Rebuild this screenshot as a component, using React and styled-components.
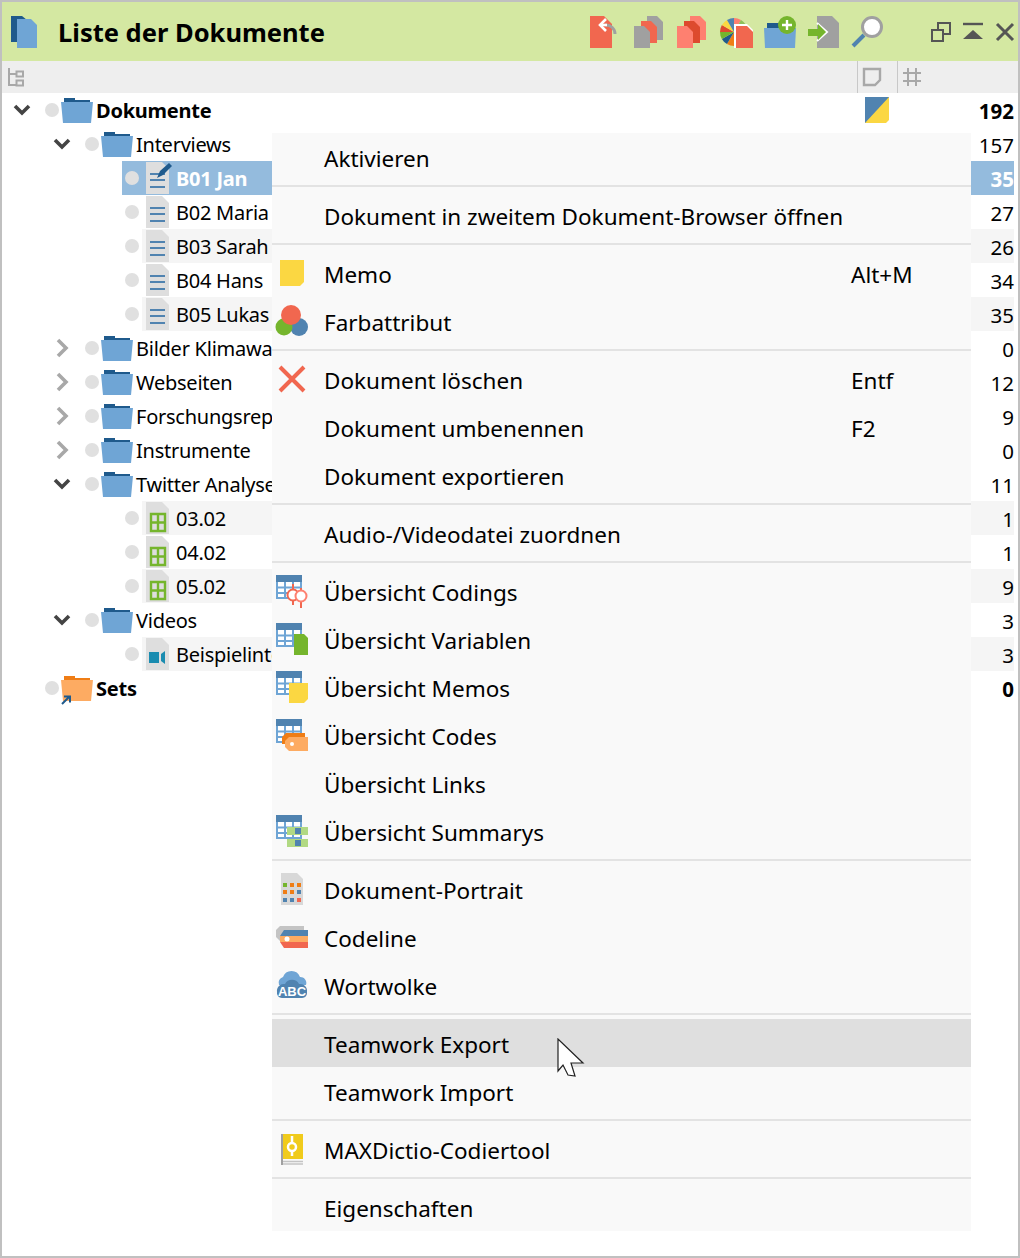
import React from "react";
import styled, { createGlobalStyle } from "styled-components";

const BLUE = "#5083b0";
const LIGHT_BLUE = "#6fa5d5";
const NAVY = "#1f5a8c";
const RED = "#f1674f";
const SALMON = "#fe8070";
const GREEN = "#75b52d";
const YELLOW = "#fbd742";
const ORANGE = "#ef7d15";
const PEACH = "#fdab62";
const GRAY = "#a0a0a0";

const Global = createGlobalStyle`
  html, body {
    margin: 0;
    padding: 0;
    background: #fff;
  }
  body {
    font-family: "Noto Sans", "Open Sans", sans-serif;
    color: #000;
  }
`;

const Win = styled.div`
  position: relative;
  box-sizing: border-box;
  width: 1020px;
  height: 1258px;
  border: 2px solid #c0c0c0;
  background: #fff;
  overflow: hidden;
`;

const TitleBar = styled.div`
  display: flex;
  align-items: center;
  height: 59px;
  padding-left: 9px;
  background: #d4e8a2;
`;

const Title = styled.div`
  margin-left: 20px;
  font-size: 25.5px;
  font-weight: 700;
  flex: 1;
`;

const Tools = styled.div`
  display: flex;
  align-items: center;
  gap: 11.5px;
  margin-right: 48px;
`;

const WinButtons = styled.div`
  display: flex;
  align-items: center;
  gap: 12px;
  margin-right: 3px;
`;

const HeadBar = styled.div`
  display: flex;
  align-items: center;
  height: 32px;
  background: #eeeeee;
`;

const HeadTree = styled.div`
  flex: 1;
  display: flex;
  padding-left: 6px;
`;

const HeadCell = styled.div`
  box-sizing: border-box;
  display: flex;
  align-items: center;
  height: 32px;
  width: ${(p) => p.$w}px;
  padding-left: 5px;
  border-left: 1px solid #c8c8c8;
`;

const Tree = styled.div`
  margin-right: 4px;
`;

const Row = styled.div`
  display: flex;
  height: 34px;
  padding-left: ${(p) => p.$level * 40}px;
`;

const Toggle = styled.div`
  width: 40px;
  display: flex;
  align-items: center;
  justify-content: center;
  flex: none;
`;

const Body = styled.div`
  flex: 1;
  min-width: 0;
  display: flex;
  align-items: center;
  padding-left: 3px;
  background: ${(p) => (p.$selected ? "#94bbdd" : "transparent")};
  color: ${(p) => (p.$selected ? "#fff" : "#000")};
`;

const Dot = styled.span`
  flex: none;
  width: 14px;
  height: 14px;
  border-radius: 50%;
  background: #e0e0e0;
  margin-top: -1px;
`;

const Label = styled.div`
  flex: 1;
  min-width: 0;
  height: 34px;
  display: flex;
  align-items: center;
  margin-left: ${(p) => (p.$leaf ? 3 : 2)}px;
  padding-left: ${(p) => (p.$leaf ? 4 : 0)}px;
  background: ${(p) => (p.$striped ? "#f5f5f5" : "transparent")};
`;

const Name = styled.span`
  margin: 1px 0 0 ${(p) => (p.$leaf ? 7 : 3)}px;
  font-size: 20px;
  letter-spacing: -0.25px;
  font-weight: ${(p) => (p.$bold ? 700 : 400)};
  white-space: nowrap;
`;

const MemoCell = styled.div`
  flex: none;
  width: 40px;
  height: 34px;
  display: flex;
  align-items: center;
  padding-left: 8px;
  box-sizing: border-box;
  background: ${(p) => (p.$striped ? "#f5f5f5" : "transparent")};
`;

const Count = styled.div`
  flex: none;
  width: 117px;
  height: 34px;
  line-height: 36px;
  text-align: right;
  font-size: 20.5px;
  font-weight: ${(p) => (p.$bold ? 700 : 400)};
  background: ${(p) => (p.$striped ? "#f5f5f5" : "transparent")};
`;

const Menu = styled.div`
  position: absolute;
  left: 270px;
  top: 131px;
  width: 699px;
  background: #f9f9f9;
`;

const Item = styled.div`
  position: relative;
  display: grid;
  grid-template-columns: 52px 527px 1fr;
  height: 48px;
  background: ${(p) => (p.$hover ? "#dfdfdf" : "transparent")};
`;

const ItemIcon = styled.div`
  padding: 8px 0 0 4px;
  height: 32px;
`;

const ItemText = styled.div`
  font-size: 22.5px;
  line-height: 52px;
  white-space: nowrap;
`;

const Separator = styled.div`
  height: 2px;
  margin: 4px 0;
  background: #e3e3e3;
`;

const Pointer = styled.svg`
  position: absolute;
  left: 285px;
  top: 19px;
`;

const Svg = ({ w = 32, h = 32, children }) => (
  <svg width={w} height={h} viewBox={`0 0 ${w} ${h}`} style={{ display: "block", flex: "none", overflow: "visible" }}>
    {children}
  </svg>
);

const pageShape = (x, y, w, h, c = 6) =>
  `M${x} ${y}h${w - c}l${c} ${c}v${h - c}h-${w}z`;

const noteShape = (x, y, w, h, c = 4) =>
  `M${x} ${y}h${w}v${h - c}l-${c} ${c}h-${w - c}z`;

const TableBase = () => (
  <>
    <rect x="1" y="1" width="24" height="22" fill="#fff" stroke={LIGHT_BLUE} strokeWidth="2" />
    <path d="M9 7v16M17 7v16M1 12.5h24M1 18h24" stroke={LIGHT_BLUE} strokeWidth="2" />
    <rect x="0" y="0" width="26" height="7" fill={BLUE} />
  </>
);

const icons = {
  memo: (
    <Svg>
      <path d={noteShape(4, 3, 24, 26)} fill={YELLOW} />
    </Svg>
  ),
  color: (
    <Svg>
      <circle cx="23" cy="22" r="9" fill={BLUE} />
      <circle cx="8" cy="22" r="8.5" fill={GREEN} />
      <circle cx="15" cy="10" r="10" fill={RED} />
    </Svg>
  ),
  cross: (
    <Svg>
      <path d="M4 4L28 28M28 4L4 28" stroke={RED} strokeWidth="4" />
    </Svg>
  ),
  codings: (
    <Svg>
      <TableBase />
      <path d="M17 9v21M25 13v20" stroke={RED} strokeWidth="2" />
      <circle cx="17" cy="20" r="5.5" fill="#fff" stroke={RED} strokeWidth="2" />
      <circle cx="25" cy="21" r="5.5" fill="#fff" stroke={SALMON} strokeWidth="2" />
    </Svg>
  ),
  variables: (
    <Svg>
      <TableBase />
      <path d={pageShape(18, 11, 14, 21, 4)} fill={GREEN} />
    </Svg>
  ),
  memos: (
    <Svg>
      <TableBase />
      <path d={noteShape(13, 12, 19, 20)} fill={YELLOW} />
    </Svg>
  ),
  codes: (
    <Svg>
      <TableBase />
      <path d="M10 14h19v11H6l0-7z" fill={ORANGE} />
      <path d="M13 18h19v14H13l-4-4v-6z" fill={PEACH} />
      <circle cx="16" cy="25" r="2" fill="#fff" />
    </Svg>
  ),
  summaries: (
    <Svg>
      <TableBase />
      <rect x="11" y="12" width="21" height="8" fill="#b1d983" />
      <rect x="11" y="24" width="21" height="8" fill="#b1d983" />
      <rect x="19" y="13" width="6" height="6" fill={BLUE} />
      <rect x="19" y="25" width="6" height="6" fill={BLUE} />
    </Svg>
  ),
  portrait: (
    <Svg>
      <path d={pageShape(5, 0, 22, 32)} fill="#d8d8d8" />
      {[
        [7, 10, GREEN], [14, 10, ORANGE], [21, 10, ORANGE],
        [7, 17, ORANGE], [14, 17, ORANGE], [21, 17, BLUE],
        [7, 25, BLUE], [14, 25, BLUE], [21, 25, RED],
      ].map(([x, y, c]) => (
        <rect key={`${x}-${y}`} x={x} y={y} width="4" height="4" fill={c} />
      ))}
    </Svg>
  ),
  codeline: (
    <Svg>
      <path d="M4 5h24v6H8v12l-4-3-4-4V9z" fill="#c4c4c4" />
      <path d="M8 9h24v6H4z" fill={BLUE} />
      <path d="M4 15h28v6H4z" fill={PEACH} />
      <path d="M4 21h28v6H8z" fill={RED} />
      <circle cx="11" cy="18" r="2.5" fill="#fff" />
    </Svg>
  ),
  cloud: (
    <Svg>
      <path d="M3 16a6 6 0 0 1 4-8a9 9 0 0 1 17 0a6 6 0 0 1 6 8z" fill={LIGHT_BLUE} />
      <path d="M6 29a5 5 0 0 1-5-6a7 7 0 0 1 8-8a8 8 0 0 1 14 0a7 7 0 0 1 8 8a5 5 0 0 1-5 6z" fill={BLUE} />
      <text x="16" y="27" textAnchor="middle" fontFamily="Liberation Sans, sans-serif" fontSize="13" fontWeight="700" fill="#fff">
        ABC
      </text>
    </Svg>
  ),
  dictio: (
    <Svg>
      <rect x="5" y="1" width="22" height="25" fill="#f0cb1c" />
      <rect x="5" y="1" width="2" height="31" fill={GRAY} />
      <path d="M7 28.5h20M7 31h20" stroke="#c4c4c4" strokeWidth="1.5" />
      <path d="M16 3v20" stroke="#fff" strokeWidth="2.5" />
      <circle cx="16" cy="14" r="4" fill="#f0cb1c" stroke="#fff" strokeWidth="2.5" />
    </Svg>
  ),
};

const menuGroups = [
  [{ text: "Aktivieren" }],
  [{ text: "Dokument in zweitem Dokument-Browser öffnen" }],
  [
    { text: "Memo", icon: "memo", key: "Alt+M" },
    { text: "Farbattribut", icon: "color" },
  ],
  [
    { text: "Dokument löschen", icon: "cross", key: "Entf" },
    { text: "Dokument umbenennen", key: "F2" },
    { text: "Dokument exportieren" },
  ],
  [{ text: "Audio-/Videodatei zuordnen" }],
  [
    { text: "Übersicht Codings", icon: "codings" },
    { text: "Übersicht Variablen", icon: "variables" },
    { text: "Übersicht Memos", icon: "memos" },
    { text: "Übersicht Codes", icon: "codes" },
    { text: "Übersicht Links" },
    { text: "Übersicht Summarys", icon: "summaries" },
  ],
  [
    { text: "Dokument-Portrait", icon: "portrait" },
    { text: "Codeline", icon: "codeline" },
    { text: "Wortwolke", icon: "cloud" },
  ],
  [
    { text: "Teamwork Export", hover: true },
    { text: "Teamwork Import" },
  ],
  [{ text: "MAXDictio-Codiertool", icon: "dictio" }],
  [{ text: "Eigenschaften" }],
];

const rows = [
  { name: "Dokumente", level: 0, kind: "folder", open: true, bold: true, count: 192, memo: true },
  { name: "Interviews", level: 1, kind: "folder", open: true, count: 157 },
  { name: "B01 Jan", level: 2, kind: "text", bold: true, selected: true, count: 35 },
  { name: "B02 Maria", level: 2, kind: "text", count: 27 },
  { name: "B03 Sarah", level: 2, kind: "text", striped: true, count: 26 },
  { name: "B04 Hans", level: 2, kind: "text", count: 34 },
  { name: "B05 Lukas", level: 2, kind: "text", striped: true, count: 35 },
  { name: "Bilder Klimawandel", level: 1, kind: "folder", open: false, count: 0 },
  { name: "Webseiten", level: 1, kind: "folder", open: false, count: 12 },
  { name: "Forschungsreports", level: 1, kind: "folder", open: false, count: 9 },
  { name: "Instrumente", level: 1, kind: "folder", open: false, count: 0 },
  { name: "Twitter Analyse", level: 1, kind: "folder", open: true, count: 11 },
  { name: "03.02", level: 2, kind: "table", striped: true, count: 1 },
  { name: "04.02", level: 2, kind: "table", count: 1 },
  { name: "05.02", level: 2, kind: "table", striped: true, count: 9 },
  { name: "Videos", level: 1, kind: "folder", open: true, count: 3 },
  { name: "Beispielinterview", level: 2, kind: "video", striped: true, count: 3 },
  { name: "Sets", level: 0, kind: "set", bold: true, count: 0 },
];

const Chevron = ({ open }) =>
  open ? (
    <Svg w={18} h={12}>
      <path d="M2 2l7 7 7-7" fill="none" stroke="#444" strokeWidth="3.6" />
    </Svg>
  ) : (
    <Svg w={14} h={20}>
      <path d="M3 2l8 8-8 8" fill="none" stroke="#a8a8a8" strokeWidth="3.6" />
    </Svg>
  );

const Folder = ({ tab = NAVY, body = LIGHT_BLUE, link }) => (
  <Svg w={32} h={25}>
    <path d="M3 0h11v2h15v6H3z" fill={tab} />
    <path d="M0 4h32l-2 21H2z" fill={body} />
    {link && <path d="M1 28l7-7M3 20.5h6v6" fill="none" stroke={NAVY} strokeWidth="2" />}
  </Svg>
);

const LeafIcon = ({ kind, selected }) => (
  <Svg w={23} h={32}>
    <path d={pageShape(0, 0, 23, 32, 7)} fill="#dedede" />
    {kind === "text" && (
      <path d="M4 12h15M4 18h15M4 25h15" stroke={BLUE} strokeWidth="2" />
    )}
    {kind === "table" && (
      <path d="M5 12h14v17H5zM12 12v17M5 20.5h14" fill="none" stroke={GREEN} strokeWidth="2.4" />
    )}
    {kind === "video" && (
      <>
        <rect x="3" y="14" width="10" height="11" fill="#1a8cb0" />
        <path d="M19 13v13l-4-3v-7z" fill="#1a8cb0" />
      </>
    )}
    {selected && <path d="M11 16l3-7L23 1l3 3-9 9z" fill={NAVY} />}
  </Svg>
);

const TreeRow = ({ row }) => {
  const leaf = row.level === 2;
  return (
    <Row $level={row.level}>
      <Toggle>{row.open !== undefined && <Chevron open={row.open} />}</Toggle>
      <Body $selected={row.selected}>
        <Dot />
        <Label $leaf={leaf} $striped={row.striped}>
          {row.kind === "folder" && <Folder />}
          {row.kind === "set" && <Folder tab={ORANGE} body={PEACH} link />}
          {leaf && <LeafIcon kind={row.kind} selected={row.selected} />}
          <Name $leaf={leaf} $bold={row.bold}>
            {row.name}
          </Name>
        </Label>
        <MemoCell $striped={row.striped}>
          {row.memo && (
            <Svg w={24} h={26}>
              <path d={noteShape(0, 0, 24, 26, 3)} fill={YELLOW} />
              <path d="M0 0h24L0 26z" fill={BLUE} />
            </Svg>
          )}
        </MemoCell>
        <Count $bold={row.bold} $striped={row.striped}>
          {row.count}
        </Count>
      </Body>
    </Row>
  );
};

const pieColors = [SALMON, "#8fbf5a", "#7cc8e8", RED, BLUE, YELLOW, ORANGE, NAVY, GREEN, "#dd4a2e", YELLOW, BLUE];

const Pie = () => (
  <>
    {pieColors.map((c, i) => {
      const a = (i / pieColors.length) * Math.PI * 2 - Math.PI / 2;
      const b = ((i + 1) / pieColors.length) * Math.PI * 2 - Math.PI / 2;
      const p = (t) => `${(13 + 14 * Math.cos(t)).toFixed(2)} ${(16 + 14 * Math.sin(t)).toFixed(2)}`;
      return <path key={i} d={`M13 16L${p(a)}A14 14 0 0 1 ${p(b)}z`} fill={c} />;
    })}
  </>
);

const ThreeDocs = ({ a, b }) => (
  <Svg>
    <path d={pageShape(13, 0, 16, 24)} fill={a} />
    <path d={pageShape(7, 5, 16, 22)} fill={b} />
    <path d={pageShape(0, 10, 16, 22)} fill={a} />
  </Svg>
);

const App = () => (
  <>
    <Global />
    <Win>
      <TitleBar>
        <Svg w={27} h={32}>
          <path d="M0 0h11l5 4v22H0z" fill={NAVY} />
          <path d={pageShape(6, 3, 20, 29, 6)} fill={LIGHT_BLUE} />
        </Svg>
        <Title>Liste der Dokumente</Title>
        <Tools>
          <Svg>
            <path d={pageShape(0, 0, 22, 32, 8)} fill={RED} />
            <path d="M15 9a9 9 0 0 1 10 9" fill="none" stroke={GRAY} strokeWidth="3" />
            <path d="M16 3l-6 6 6 6" fill="none" stroke="#fff" strokeWidth="2.6" />
            <path d="M11 9h6" stroke="#fff" strokeWidth="2.6" />
          </Svg>
          <ThreeDocs a={GRAY} b={RED} />
          <ThreeDocs a={SALMON} b="#dd4a2e" />
          <Svg>
            <Pie />
            <path d={pageShape(13, 8, 19, 24, 6)} fill="#fff" />
            <path d={pageShape(15, 10, 17, 22, 6)} fill={RED} />
          </Svg>
          <Svg>
            <rect x="3" y="7" width="14" height="6" fill={NAVY} />
            <path d="M0 12h32l-1 20H1z" fill={LIGHT_BLUE} />
            <circle cx="23" cy="9" r="9" fill={GREEN} />
            <path d="M23 4v10M18 9h10" stroke="#fff" strokeWidth="2.4" />
          </Svg>
          <Svg>
            <path d={pageShape(9, 0, 22, 32, 7)} fill={GRAY} />
            <path d="M9 7l10 9-10 9" fill="none" stroke="#fff" strokeWidth="2" />
            <path d="M0 13h10V8l8 8-8 8v-4H0z" fill={GREEN} />
          </Svg>
          <Svg>
            <path d="M2 30L13 19" stroke={BLUE} strokeWidth="4" />
            <circle cx="21" cy="11" r="9.5" fill="#fff" stroke={GRAY} strokeWidth="3" />
          </Svg>
        </Tools>
        <WinButtons>
          <Svg w={20} h={20}>
            <path d="M7 7V1h12v11h-7M1 8h11v11H1z" fill="none" stroke="#555" strokeWidth="2" />
          </Svg>
          <Svg w={20} h={20}>
            <path d="M0 2h20" stroke="#555" strokeWidth="2.4" />
            <path d="M10 8l10 9H0z" fill="#555" />
          </Svg>
          <Svg w={20} h={20}>
            <path d="M2 2l16 16M18 2L2 18" stroke="#555" strokeWidth="3" />
          </Svg>
        </WinButtons>
      </TitleBar>
      <HeadBar>
        <HeadTree>
          <Svg w={16} h={18}>
            <path d="M1 0v17h7M1 6h7" fill="none" stroke="#a8a8a8" strokeWidth="2" />
            <rect x="8.5" y="3.5" width="6.5" height="5" fill="none" stroke="#a8a8a8" strokeWidth="2" />
            <rect x="8.5" y="12.5" width="6.5" height="5" fill="none" stroke="#a8a8a8" strokeWidth="2" />
          </Svg>
        </HeadTree>
        <HeadCell $w={40}>
          <Svg w={18} h={18}>
            <path d="M1 1h16v11l-5 5H1z" fill="none" stroke="#a8a8a8" strokeWidth="2.4" />
          </Svg>
        </HeadCell>
        <HeadCell $w={121}>
          <Svg w={18} h={18}>
            <path d="M5 0v18M13 0v18M0 5h18M0 13h18" stroke="#a8a8a8" strokeWidth="2" />
          </Svg>
        </HeadCell>
      </HeadBar>
      <Tree>
        {rows.map((row) => (
          <TreeRow key={row.name} row={row} />
        ))}
      </Tree>
      <Menu>
        {menuGroups.map((group, g) => (
          <React.Fragment key={g}>
            {g > 0 && <Separator />}
            {group.map((item) => (
              <Item key={item.text} $hover={item.hover}>
                <ItemIcon>{item.icon && icons[item.icon]}</ItemIcon>
                <ItemText>{item.text}</ItemText>
                <ItemText>{item.key}</ItemText>
                {item.hover && (
                  <Pointer width="28" height="42" viewBox="0 0 28 42">
                    <path d="M1 1V33L6 27L11 37L18 38L14 25H26z" fill="#fff" stroke="#222" strokeWidth="1.2" />
                  </Pointer>
                )}
              </Item>
            ))}
          </React.Fragment>
        ))}
      </Menu>
    </Win>
  </>
);

export default App;
